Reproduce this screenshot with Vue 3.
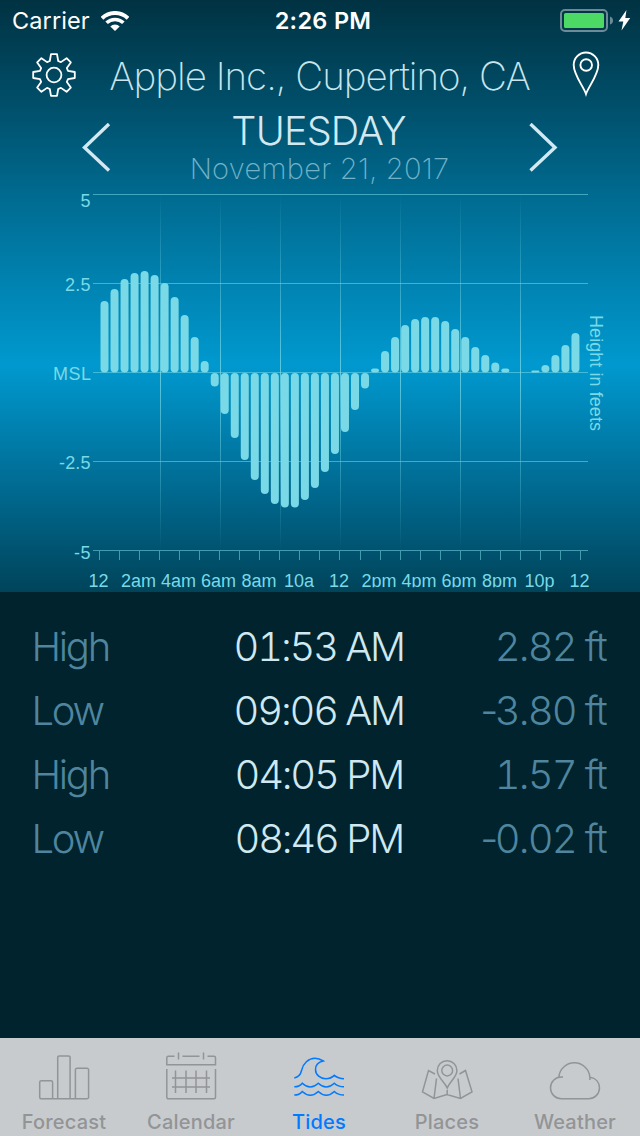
<script setup>
const BASE = 372.5
const STEP = 10.02

// End of each half-hour bar on the vertical axis; null where the tide is at mean level.
const ends = [
  301, 289, 279, 273, 271, 275, 283, 297, 315, 337, 361,
  386.5, 414, 438, 460, 480, 494, 504, 507.5, 507.5, 500, 488, 472, 454, 432, 410, 388.5,
  368.5, 351, 337, 325, 319, 317, 317, 321, 329, 337, 347, 355, 362.5, 368.5,
  null, null, 370.5, 365, 355, 345, 333,
]

const bars = ends
  .map((end, i) => ({ end, x: 100.5 + i * STEP }))
  .filter((b) => b.end !== null)
  .map((b) => {
    const up = b.end < BASE
    const y = up ? b.end : 373
    const h = up ? BASE - b.end : b.end - 373
    return { x: b.x, y, h, r: Math.min(4, h > 8 ? 4 : h * 0.6) }
  })

const rows = [194.5, 283.5, 372.5, 461.5, 550.5]
const columns = [160, 220, 280, 340, 400, 460, 520]
const ticks = Array.from({ length: 25 }, (_, i) => 99.5 + i * 20.04)

const yLabels = [
  { t: '5', y: 207, x: 80.5, w: 10 },
  { t: '2.5', y: 291, x: 65, w: 25.5 },
  { t: 'MSL', y: 380, x: 53, w: 38 },
  { t: '-2.5', y: 469, x: 59, w: 31.5 },
  { t: '-5', y: 559, x: 74, w: 16.5 },
]

const xLabels = [
  { t: '12', x: 98.5 }, { t: '2am', x: 138.5 }, { t: '4am', x: 178.5 }, { t: '6am', x: 218.5 },
  { t: '8am', x: 259 }, { t: '10a', x: 299 }, { t: '12', x: 339 }, { t: '2pm', x: 379 },
  { t: '4pm', x: 419 }, { t: '6pm', x: 459 }, { t: '8pm', x: 499.5 }, { t: '10p', x: 539.5 }, { t: '12', x: 579.5 },
]

const tides = [
  { kind: 'High', time: '01:53 AM', sign: '', height: '2.82 ft' },
  { kind: 'Low', time: '09:06 AM', sign: '-', height: '3.80 ft' },
  { kind: 'High', time: '04:05 PM', sign: '', height: '1.57 ft' },
  { kind: 'Low', time: '08:46 PM', sign: '-', height: '0.02 ft' },
]

const tooth = [[-4.2, 14], [-3, 20.8], [3, 20.8], [4.2, 14]]
const gear = Array.from({ length: 8 }, (_, k) => {
  const a = (k * Math.PI) / 4
  return tooth.map(([t, r]) => {
    const x = 22 + t * Math.cos(a) + r * Math.sin(a)
    const y = 22 + t * Math.sin(a) - r * Math.cos(a)
    return `${x.toFixed(2)},${y.toFixed(2)}`
  })
}).flat().join(' ')
</script>

<template>
  <div class="screen">
    <section class="top">
      <div class="status">
        <div class="carrier">
          <span>Carrier</span>
          <svg width="28" height="20" viewBox="0 0 28 20" fill="none" stroke="#fff">
            <path d="M1 7.2A18.8 18.8 0 0 1 27 7.2" stroke-width="4" />
            <path d="M5.6 11.8A12.2 12.2 0 0 1 22.4 11.8" stroke-width="3.6" />
            <path d="M14 20L9.3 15.4A6.7 6.7 0 0 1 18.7 15.4Z" fill="#fff" stroke="none" />
          </svg>
        </div>
        <span class="clock">2:26 PM</span>
        <svg class="battery" width="72" height="24" viewBox="0 0 72 24">
          <rect x="1" y="1" width="46" height="21" rx="4" fill="none" stroke="#fff" stroke-opacity=".42" stroke-width="2" />
          <rect x="4" y="4" width="40" height="15" rx="1.6" fill="#4cd964" />
          <path d="M50 7.5Q53 8.5 53 11.5T50 15.5Z" fill="#fff" fill-opacity=".42" />
          <path d="M66.5 1L58.5 12.5H63.3L61.5 21.5L70.2 9H65.3Z" fill="#fff" />
        </svg>
      </div>

      <header class="place">
        <svg class="gear" width="44" height="44" viewBox="0 0 44 44" fill="none" stroke="#fff" stroke-width="1.8" stroke-linejoin="round">
          <polygon :points="gear" />
          <circle cx="22" cy="22" r="7.4" />
        </svg>
        <h1>Apple Inc., Cupertino, CA</h1>
        <svg class="pin" width="28" height="46" viewBox="0 0 28 46" fill="none" stroke="#fff" stroke-width="1.9">
          <path d="M14 43C11.5 35.5 1.7 24 1.7 14A12.3 12.5 0 0 1 26.3 14C26.3 24 16.5 35.5 14 43Z" />
          <circle cx="14.2" cy="14" r="5.8" />
        </svg>
      </header>

      <div class="day">
        <svg width="30" height="50" viewBox="0 0 30 50" fill="none" stroke="#d3e9f2" stroke-width="3.4"><path d="M27 1L2.5 24.5L27 47.5" /></svg>
        <div class="date">
          <h2>TUESDAY</h2>
          <p>November 21, 2017</p>
        </div>
        <svg width="30" height="50" viewBox="0 0 30 50" fill="none" stroke="#d3e9f2" stroke-width="3.4"><path d="M2.5 1L27 24.5L2.5 47.5" /></svg>
      </div>

      <svg class="chart" width="640" height="404" viewBox="0 188 640 404">
        <defs>
          <linearGradient id="fade" x1="0" y1="194" x2="0" y2="551" gradientUnits="userSpaceOnUse">
            <stop offset="0" stop-color="#79d9e6" stop-opacity="0" />
            <stop offset=".5" stop-color="#79d9e6" stop-opacity=".75" />
            <stop offset="1" stop-color="#79d9e6" stop-opacity="0" />
          </linearGradient>
          <clipPath id="axis"><rect x="85" y="565" width="435" height="22.3" /><rect x="520" y="565" width="120" height="27" /></clipPath>
        </defs>
        <rect v-for="x in columns" :key="'c' + x" :x="x" y="194" width="1" height="357" fill="url(#fade)" />
        <g stroke="#79d9e6" stroke-opacity=".55">
          <path v-for="y in rows" :key="y" :d="`M93 ${y}H588`" />
          <path v-for="x in ticks" :key="x" :d="`M${Math.floor(x) + 0.5} 551V560`" />
        </g>
        <g fill="#79d9e6">
          <rect v-for="b in bars" :key="b.x" :x="b.x" :y="b.y" width="8" :height="b.h" :rx="b.r" />
        </g>
        <g class="labels">
          <text v-for="l in yLabels" :key="l.t" :x="l.x" :y="l.y" :textLength="l.w">{{ l.t }}</text>
          <g clip-path="url(#axis)" text-anchor="middle">
            <text v-for="l in xLabels" :key="l.x" :x="l.x" y="587">{{ l.t }}</text>
          </g>
          <text class="unit" transform="translate(590 315) rotate(90)" textLength="116">Height in feets</text>
        </g>
      </svg>
    </section>

    <ul class="tides">
      <li v-for="t in tides" :key="t.time">
        <span class="kind">{{ t.kind }}</span>
        <span class="time">{{ t.time }}</span>
        <span class="height"><span v-if="t.sign" class="sign">{{ t.sign }}</span>{{ t.height }}</span>
      </li>
    </ul>

    <nav>
      <a>
        <svg viewBox="0 0 56 50"><path d="M3.7 37.5a1.6 1.6 0 0 0 1.6 1.3H51a1.6 1.6 0 0 0 1.6-1.6V9.9A1.6 1.6 0 0 0 51 8.3H41a1.6 1.6 0 0 0-1.6 1.6V38.5M3.7 37.5V22.3a1.6 1.6 0 0 1 1.6-1.6H15a1.6 1.6 0 0 1 1.6 1.6V38.5M21.7 38.5V-2.5a1.6 1.6 0 0 1 1.6-1.6H32.5a1.6 1.6 0 0 1 1.6 1.6V38.5" /></svg>
        <span>Forecast</span>
      </a>
      <a>
        <svg viewBox="0 0 56 50"><path d="M11.5-3.8H5.3a1.5 1.5 0 0 0-1.5 1.5V4.8H52.5V-2.3A1.5 1.5 0 0 0 51-3.8H44.5M19.5-3.8H36.5M15.5-7.5V-.5M40.5-7.5V-.5M3.8 9V37.3a1.5 1.5 0 0 0 1.5 1.5H51a1.5 1.5 0 0 0 1.5-1.5V9M12.5 10.5V33M23 10.5V33M33 10.5V33M43.5 10.5V33M9 18H47M9 27H47" /></svg>
        <span>Calendar</span>
      </a>
      <a class="active">
        <svg viewBox="0 0 56 50"><path d="M3.3 18C7.5 17.2 9.8 14 10.7 10C12 3.5 17.5-1.7 24-1.7C27.5-1.7 30 -.5 32.3 1C27.5 2 24.5 4.5 24.5 9.5C24.5 15 29.5 18.7 34.7 18.7Q40 18.7 43.3 15.4Q47 18.7 53 18.7M3.3 26.8Q8.3 26.8 11.3 23.2Q19.3 30.8 27.3 23.2Q35.3 30.8 43.3 23.2Q47 26.8 53 26.8M3.3 35.1Q8.3 35.1 11.3 31.5Q19.3 39.1 27.3 31.5Q35.3 39.1 43.3 31.5Q47 35.1 53 35.1" /></svg>
        <span>Tides</span>
      </a>
      <a>
        <svg viewBox="0 0 56 50"><path d="M28.2 28C25.5 21.5 18.3 17.5 18.3 10.5A9.8 9.8 0 0 1 37.9 10.5C37.9 17.5 30.5 21.5 28.2 28ZM16 14L9.5 10.5L3.5 31.8L15 38.5L28 34.5L41.5 38.5L53 31.8L46.5 10.5L40.5 14M17.5 18.5L15 38.5M39 18.5L41.5 38.5M28.2 30V34.5" /><circle cx="28.2" cy="10.5" r="5.4" /></svg>
        <span>Places</span>
      </a>
      <a>
        <svg viewBox="0 0 56 50"><path d="M16 17H14.3A10.8 10.8 0 0 0 3.5 28A10.8 10.8 0 0 0 14.5 38.7H41.5A10.8 10.8 0 0 0 52.5 28C52.5 22 48.5 18 42.9 17.2V20M42.9 17.2A15.6 15.6 0 0 0 11.8 17.2" /></svg>
        <span>Weather</span>
      </a>
    </nav>
  </div>
</template>

<style>
body {
  background: #00232d;
}
</style>

<style scoped>
.screen {
  width: 640px;
  height: 1136px;
  display: flex;
  flex-direction: column;
  background: #00232d;
  font-family: Inter, "Liberation Sans", sans-serif;
  overflow: hidden;
}
h1, h2, p, ul {
  margin: 0;
  padding: 0;
  white-space: nowrap;
}
svg {
  display: block;
  flex: none;
}
.top {
  height: 592px;
  background: linear-gradient(#003242 0, #004f6a 105px, #006c92 200px, #0099cf 365px, #00719b 470px, #00445a 592px);
}
.status {
  display: grid;
  grid-template-columns: 1fr auto 1fr;
  height: 40px;
  align-items: center;
  padding: 1px 8px 0 12px;
  box-sizing: border-box;
  color: #fff;
  font-size: 23.5px;
}
.carrier {
  display: flex;
  align-items: center;
  gap: 11px;
  letter-spacing: 0.1px;
}
.clock {
  font-weight: 600;
  letter-spacing: 0.3px;
  margin: 0 -1px 0 1px;
}
.battery {
  justify-self: end;
}
.place {
  height: 70px;
  display: grid;
  grid-template-columns: 44px 1fr 28px;
  align-items: center;
  padding: 0 40px 0 32px;
  color: #c8e5ee;
}
.place svg {
  margin-top: -1px;
}
.place .pin {
  margin-top: -2px;
}
h1 {
  font-size: 38.5px;
  line-height: 48px;
  font-weight: 200;
  letter-spacing: -1px;
  text-align: center;
  margin: 1px 9px 0 0;
}
.day {
  height: 78px;
  display: flex;
  justify-content: space-between;
  padding: 13px 82px 0;
  box-sizing: border-box;
}
.date {
  text-align: center;
  margin: -12px 1px 0 0;
}
h2 {
  font-size: 39.5px;
  line-height: 40px;
  font-weight: 300;
  letter-spacing: -0.8px;
  margin-right: 2px;
  color: #d3e9f2;
}
p {
  font-size: 29px;
  line-height: 36px;
  font-weight: 200;
  letter-spacing: 0.25px;
  color: #72b2c8;
}
.labels {
  fill: #79d9e6;
  font: 18px "Liberation Sans", sans-serif;
}
.tides {
  flex: 1;
  padding-top: 22px;
  list-style: none;
}
li {
  height: 64px;
  display: grid;
  grid-template-columns: 1fr auto 1fr;
  align-items: center;
  padding: 0 34px 0 31.5px;
  font-size: 40px;
  font-weight: 300;
  font-variant-numeric: tabular-nums;
  color: #4f859e;
}
.kind {
  letter-spacing: -2.3px;
}
.time {
  color: #cfe8f1;
  letter-spacing: -2.2px;
}
.height {
  text-align: right;
  letter-spacing: -1.8px;
}
.sign {
  font-variant-numeric: normal;
  margin-right: -2px;
}
nav {
  height: 98px;
  display: grid;
  grid-template-columns: repeat(5, 128px);
  margin-left: -1px;
  width: 641px;
  background: #c7cbce;
}
nav a {
  display: flex;
  flex-direction: column;
  align-items: center;
  padding-top: 22px;
  font-size: 20px;
  font-weight: 500;
  letter-spacing: 0.2px;
  color: #929496;
}
nav a:first-child {
  padding-left: 2px;
}
nav svg {
  width: 56px;
  height: 50px;
  overflow: visible;
  fill: none;
  stroke: currentColor;
  stroke-width: 1.5;
}
nav .active {
  color: #007aff;
}
</style>
